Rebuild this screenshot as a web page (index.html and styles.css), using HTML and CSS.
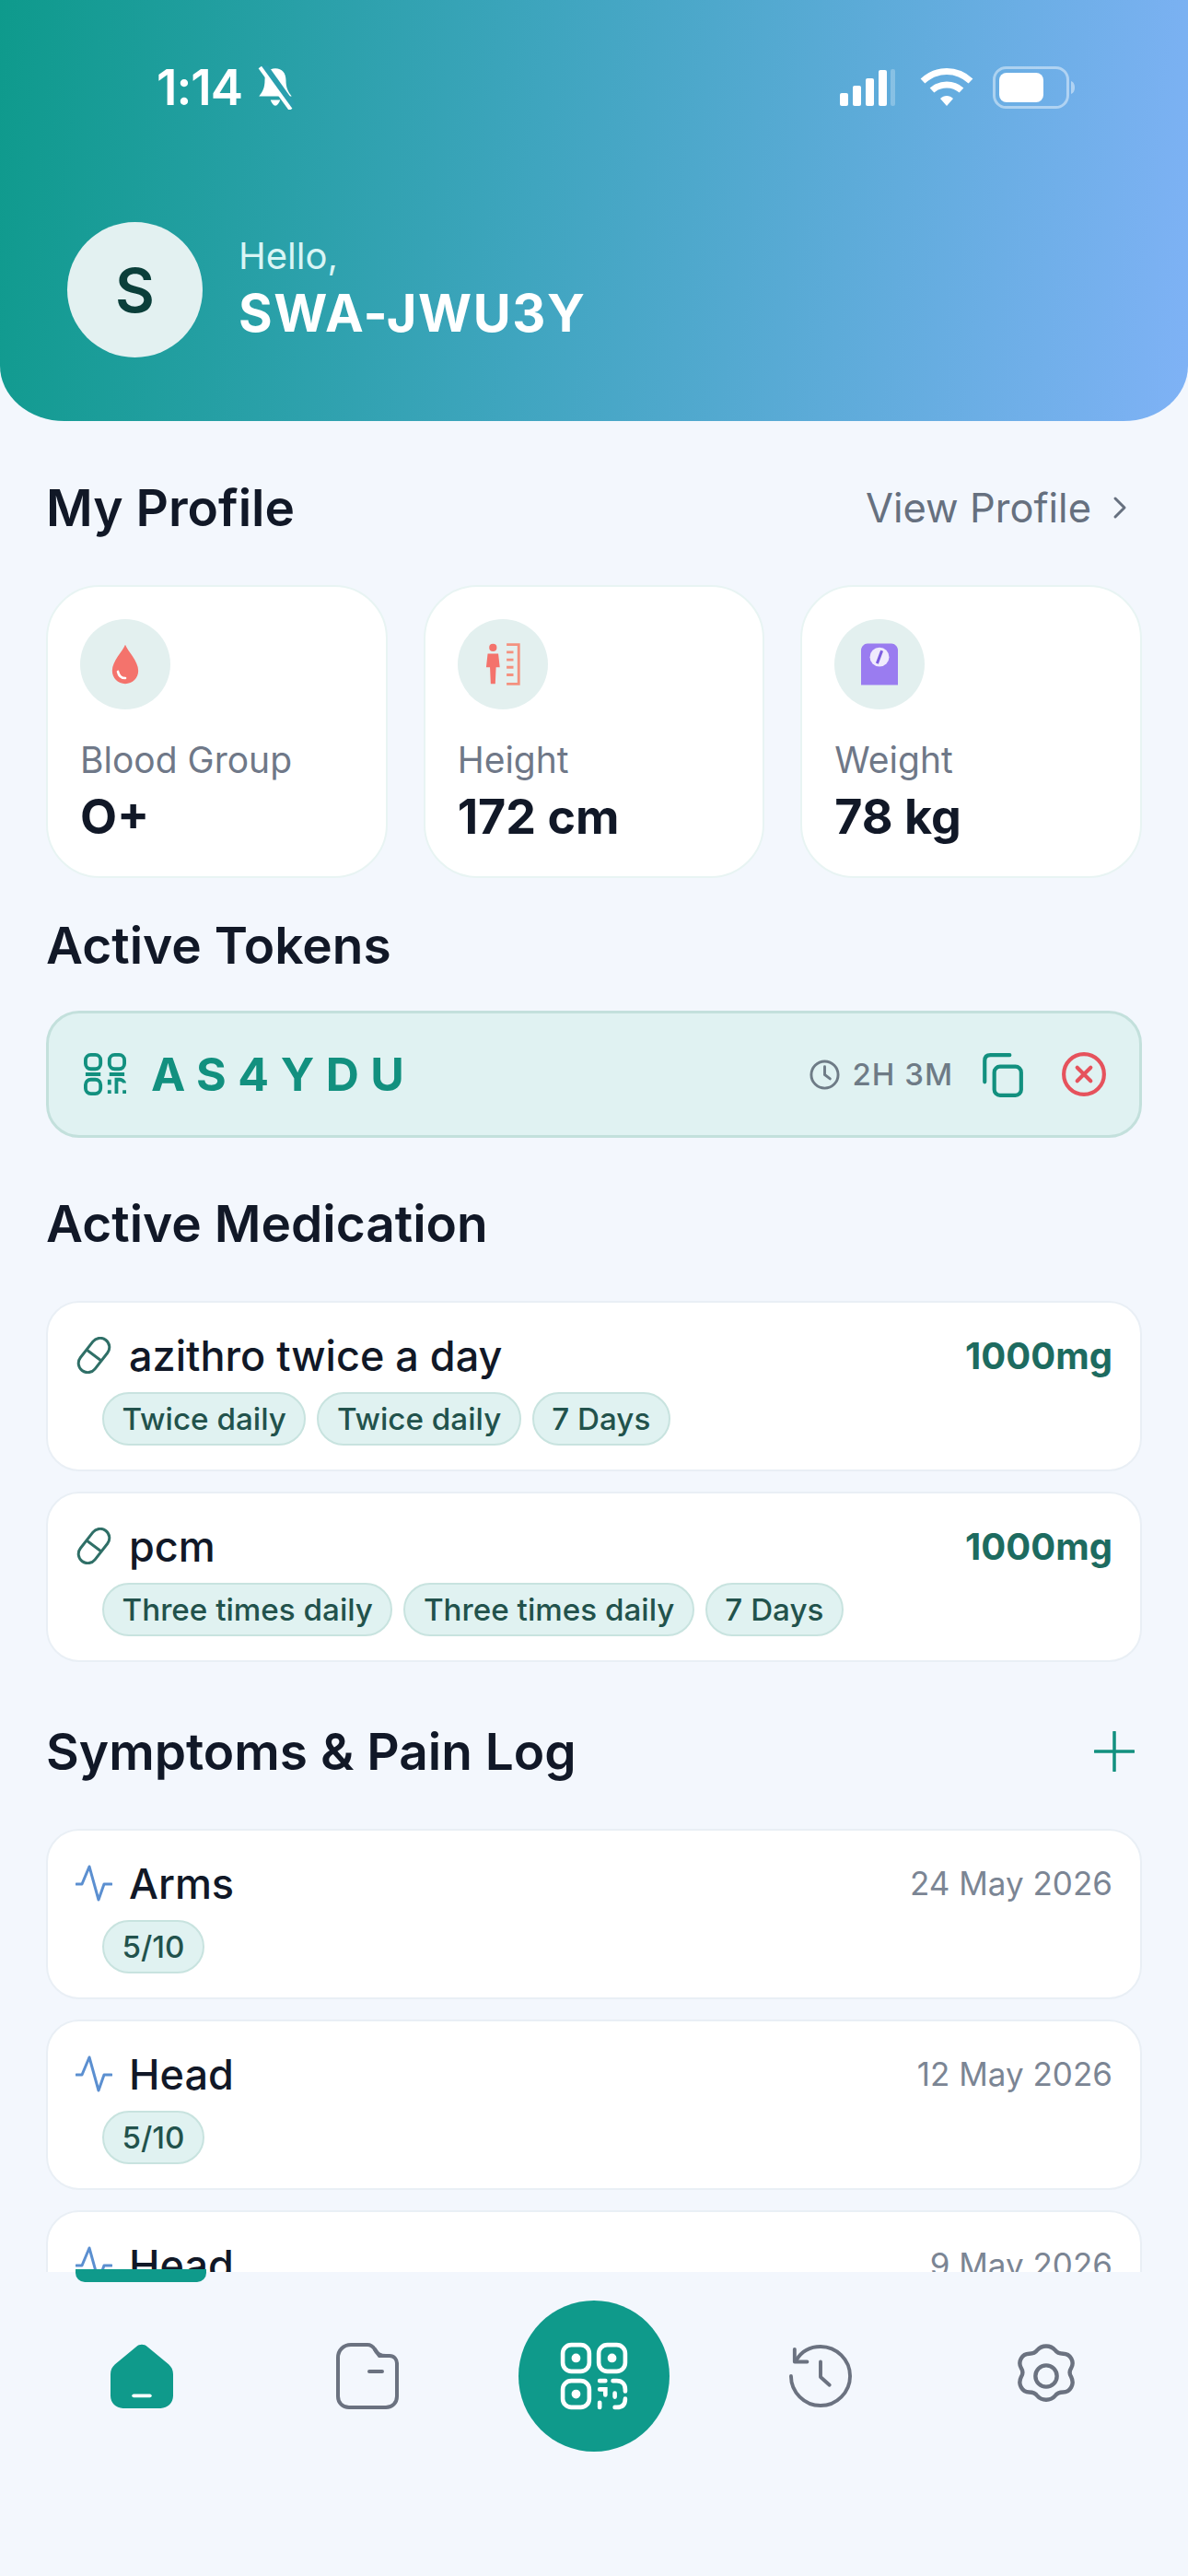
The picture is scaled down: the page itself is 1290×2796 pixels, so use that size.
FILE: index.html
```html
<!DOCTYPE html>
<html>
  <head>
    <title>My Profile</title>
    <link rel="stylesheet" href="styles.css">
  </head>
  <body>
    <div class="screen">
      <div class="top">
        <div class="status">
          <div class="time">1:14
            <svg class="bell" viewBox="0 0 44 46"><path d="M22 3c-7 0-11 5-11 12 0 8-2 12-6 17h34c-4-5-6-9-6-17 0-7-4-12-11-12z" fill="#fff"/><path d="M17 36c1 3 3 6 5 6s4-3 5-6z" fill="#fff"/><path d="M10 0l30 42" stroke="#2a9fae" stroke-width="7"/><path d="M6 2l32 44" stroke="#fff" stroke-width="4"/></svg>
          </div>
          <div class="status-icons">
            <svg class="signal" viewBox="0 0 62 40"><rect x="0" y="26" width="9" height="14" rx="2" fill="#fff"/><rect x="14" y="18" width="9" height="22" rx="2" fill="#fff"/><rect x="28" y="10" width="9" height="30" rx="2" fill="#fff"/><rect x="42" y="1" width="9" height="39" rx="2" fill="#fff"/><rect x="55" y="0" width="5" height="40" rx="2" fill="#fff" opacity=".25"/></svg>
            <svg class="wifi" viewBox="0 0 58 42"><path d="M3 14c15-14 37-14 52 0" fill="none" stroke="#fff" stroke-width="7"/><path d="M13 24c9-8 23-8 32 0" fill="none" stroke="#fff" stroke-width="7"/><path d="M22 33c4-4 10-4 14 0l-7 8z" fill="#fff"/></svg>
            <svg class="battery" viewBox="0 0 90 46"><rect x="1.5" y="1.5" width="80" height="43" rx="13" fill="none" stroke="#fff" stroke-opacity=".45" stroke-width="3"/><rect x="7" y="7" width="48" height="32" rx="8" fill="#fff"/><path d="M85 16c3 1 4 4 4 7s-1 6-4 7z" fill="#fff" opacity=".45"/></svg>
          </div>
        </div>
        <div class="hello">
          <div class="avatar">S</div>
          <div class="hello-text">
            <div class="hello-small">Hello,</div>
            <div class="hello-name">SWA-JWU3Y</div>
          </div>
        </div>
      </div>

      <div class="scroll">
        <div class="head head-profile">
          <h2>My Profile</h2>
          <div class="view-link">View Profile
            <svg class="chev" viewBox="0 0 20 28"><path d="M4 4l10 10-10 10" fill="none" stroke="#66707f" stroke-width="3" stroke-linecap="round" stroke-linejoin="round"/></svg>
          </div>
        </div>

        <div class="stats">
          <div class="stat">
            <div class="stat-icon">
              <svg viewBox="0 0 40 52"><path d="M20 2c-3 8-16 20-16 32 0 9 7 16 16 16s16-7 16-16C36 22 23 10 20 2z" fill="#f4736c"/><path d="M11 35c1 5 4 8 9 8" fill="none" stroke="#fff" stroke-width="3" stroke-linecap="round"/></svg>
            </div>
            <div class="stat-label">Blood Group</div>
            <div class="stat-value">O+</div>
          </div>
          <div class="stat">
            <div class="stat-icon">
              <svg viewBox="0 0 46 56"><circle cx="10" cy="6" r="5" fill="#f4736c"/><path d="M3 14h14l2 18h-5l-1 22H7L6 32H1z" fill="#f4736c"/><path d="M28 2h16v52H28M28 12h9M28 22h9M28 32h9M28 42h9" fill="none" stroke="#f4917f" stroke-width="3.5"/></svg>
            </div>
            <div class="stat-label">Height</div>
            <div class="stat-value">172 cm</div>
          </div>
          <div class="stat">
            <div class="stat-icon">
              <svg viewBox="0 0 46 52"><path d="M8 0h30c4 0 8 4 8 8v44H0V8c0-4 4-8 8-8z" fill="#9a7cf0"/><circle cx="23" cy="17" r="12" fill="#fff" opacity=".85"/><path d="M26 9l-6 16" stroke="#7d5ee0" stroke-width="3.5"/></svg>
            </div>
            <div class="stat-label">Weight</div>
            <div class="stat-value">78 kg</div>
          </div>
        </div>

        <div class="head head-tokens"><h2>Active Tokens</h2></div>
        <div class="token">
          <svg class="token-qr" viewBox="0 0 24 24" fill="none" stroke="#12907f" stroke-width="2"><rect x="1" y="1" width="8.500" height="8" rx="3"/><rect x="14.500" y="1" width="8.500" height="8" rx="3"/><rect x="1" y="15" width="8.500" height="8" rx="3"/><path d="M14.500 15v3M14.500 21v2M18.500 23v-8h2c1 0 2.500 1 2.500 2M23 21v2M1 12h8.500M14.500 12H23"/></svg>
          <div class="token-code">AS4YDU</div>
          <div class="token-right">
            <svg class="token-clock" viewBox="0 0 24 24" fill="none" stroke="#6e7b86" stroke-width="2" stroke-linecap="round"><circle cx="12" cy="12" r="10"/><path d="M12 6v6l4 3"/></svg>
            <span class="token-time">2H 3M</span>
            <svg class="token-copy" viewBox="0 0 24 24" fill="none" stroke="#12907f" stroke-width="2" stroke-linecap="round"><rect x="8" y="8" width="14" height="15" rx="3"/><path d="M3 16V5c0-2 1-3 3-3h10"/></svg>
            <svg class="token-close" viewBox="0 0 24 24" fill="none" stroke="#e6525c" stroke-width="2" stroke-linecap="round"><circle cx="12" cy="12" r="10.500"/><path d="M8.500 8.500l7 7M15.500 8.500l-7 7"/></svg>
          </div>
        </div>

        <div class="head head-meds"><h2>Active Medication</h2></div>
        <div class="list">
          <div class="row">
            <div class="row-top">
              <svg class="row-icon" viewBox="0 0 40 40" fill="none" stroke="#2f6f67" stroke-width="3"><rect x="-21" y="-10" width="42" height="20" rx="10" transform="translate(20 20) rotate(-52)"/><path d="M12 14l16 12"/></svg>
              <div class="row-title">azithro twice a day</div>
              <div class="dose">1000mg</div>
            </div>
            <div class="tags"><span class="tag">Twice daily</span><span class="tag">Twice daily</span><span class="tag">7 Days</span></div>
          </div>
          <div class="row">
            <div class="row-top">
              <svg class="row-icon" viewBox="0 0 40 40" fill="none" stroke="#2f6f67" stroke-width="3"><rect x="-21" y="-10" width="42" height="20" rx="10" transform="translate(20 20) rotate(-52)"/><path d="M12 14l16 12"/></svg>
              <div class="row-title">pcm</div>
              <div class="dose">1000mg</div>
            </div>
            <div class="tags"><span class="tag">Three times daily</span><span class="tag">Three times daily</span><span class="tag">7 Days</span></div>
          </div>
        </div>

        <div class="head head-symptoms">
          <h2>Symptoms &amp; Pain Log</h2>
          <svg class="plus" viewBox="0 0 44 44"><path d="M22 1v42M1 22h42" stroke="#12907f" stroke-width="3.500" stroke-linecap="round"/></svg>
        </div>
        <div class="list">
          <div class="row">
            <div class="row-top">
              <svg class="row-icon" viewBox="0 0 40 40" fill="none" stroke="#5b8fd0" stroke-width="3" stroke-linejoin="round" stroke-linecap="round"><path d="M1 21h6l8-19 10 36 6-17h8"/></svg>
              <div class="row-title">Arms</div>
              <div class="date">24 May 2026</div>
            </div>
            <div class="tags"><span class="tag">5/10</span></div>
          </div>
          <div class="row">
            <div class="row-top">
              <svg class="row-icon" viewBox="0 0 40 40" fill="none" stroke="#5b8fd0" stroke-width="3" stroke-linejoin="round" stroke-linecap="round"><path d="M1 21h6l8-19 10 36 6-17h8"/></svg>
              <div class="row-title">Head</div>
              <div class="date">12 May 2026</div>
            </div>
            <div class="tags"><span class="tag">5/10</span></div>
          </div>
          <div class="row">
            <div class="row-top">
              <svg class="row-icon" viewBox="0 0 40 40" fill="none" stroke="#5b8fd0" stroke-width="3" stroke-linejoin="round" stroke-linecap="round"><path d="M1 21h6l8-19 10 36 6-17h8"/></svg>
              <div class="row-title">Head</div>
              <div class="date">9 May 2026</div>
            </div>
          </div>
        </div>
      </div>

      <div class="nav">
        <div class="nav-bar"></div>
        <div class="nav-item">
          <svg class="nav-home" viewBox="0 0 70 72"><path d="M29 3c3-3 9-3 12 0l24 20c3 3 5 6 5 11v24c0 8-6 14-14 14H14C6 72 0 66 0 58V34c0-5 2-8 5-11z" fill="#0f9a8b"/><path d="M26 58h18" stroke="#fff" stroke-width="4" stroke-linecap="round"/></svg>
        </div>
        <div class="nav-item">
          <svg class="nav-folder" viewBox="0 0 68 72" fill="none" stroke="#6b7280" stroke-width="4" stroke-linecap="round" stroke-linejoin="round"><path d="M2 16C2 8 8 2 16 2h18c4 0 6 2 8 5l5 7h11c5 0 8 4 8 8v36c0 7-5 12-12 12H14C7 70 2 65 2 58z"/><path d="M42 7c2 5 6 7 12 7M36 31h14"/></svg>
        </div>
        <button class="scan">
          <svg viewBox="0 0 72 72" fill="none" stroke="#fff" stroke-width="4.500" stroke-linecap="round"><rect x="3" y="3" width="28" height="28" rx="9"/><rect x="41" y="3" width="28" height="28" rx="9"/><rect x="3" y="41" width="28" height="28" rx="9"/><circle cx="17" cy="17" r="2.500" fill="#fff"/><circle cx="55" cy="17" r="2.500" fill="#fff"/><circle cx="17" cy="55" r="2.500" fill="#fff"/><path d="M42 41h6M42 50h6v6M42 64v5M56 41h4c6 0 9 4 9 9v2M69 60c0 6-3 9-9 9h-2M58 54v4"/></svg>
        </button>
        <div class="nav-item">
          <svg class="nav-history" viewBox="0 0 70 72" fill="none" stroke="#6b7280" stroke-width="4" stroke-linecap="round" stroke-linejoin="round"><path d="M8 18C14 8 24 3 35 3c18 0 33 15 33 33S53 69 35 69 2 54 2 36"/><path d="M6 6v14h14"/><path d="M35 20v17l10 9"/></svg>
        </div>
        <div class="nav-item">
          <svg class="nav-gear" viewBox="0 0 70 72" fill="none" stroke="#6b7280" stroke-width="4.500" stroke-linejoin="round"><path d="M25 7c5-6 15-6 20 0 2 3 6 4 9 4 8 0 13 9 9 16-2 3-2 7 0 10 4 8-1 17-9 17-3 0-7 1-9 4-5 6-15 6-20 0-2-3-6-4-9-4-8 0-13-9-9-17 2-3 2-7 0-10-4-7 1-16 9-16 3 0 7-1 9-4z"/><circle cx="35" cy="36" r="12"/></svg>
        </div>
      </div>
    </div>
  </body>
</html>
```

FILE: styles.css
```css
body {
  margin: 0;
  padding: 0;
  font-family: Inter, "Noto Sans", sans-serif;
  color: #111827;
  background: #f3f7fd;
}

h2 { margin: 0; font-size: 55px; font-weight: 600; line-height: 68px; color: #111827; }

.screen { width: 1290px; height: 2796px; display: flex; flex-direction: column; overflow: hidden; }

/* header */
.top {
  height: 457px;
  flex: none;
  box-sizing: border-box;
  padding: 70px 122px 0 73px;
  background: linear-gradient(97deg, #0e9a8c 0%, #3fa5bf 45%, #7fb2f6 100%);
  border-radius: 0 0 70px 70px / 0 0 60px 60px;
}
.status { display: flex; justify-content: space-between; align-items: center; height: 50px; padding-left: 97px; }
.time { display: flex; align-items: center; gap: 12px; font-size: 53px; font-weight: 600; color: #fff; letter-spacing: -1px; }
.bell { width: 48px; height: 48px; }
.status-icons { display: flex; align-items: center; }
.signal { width: 62px; height: 40px; margin-right: 25px; }
.wifi { width: 58px; height: 42px; margin-right: 21px; }
.battery { width: 90px; height: 46px; }

.hello { display: flex; align-items: center; gap: 39px; margin-top: 121px; }
.avatar {
  width: 147px;
  height: 147px;
  border-radius: 50%;
  background: #e3f1f1;
  color: #0b3f3a;
  font-size: 66px;
  font-weight: 600;
  display: flex;
  align-items: center;
  justify-content: center;
}
.hello-text { padding-bottom: 3px; }
.hello-small { font-size: 40px; color: #d9f5f5; line-height: 50px; }
.hello-name { margin-top: 3px; font-size: 56px; font-weight: 700; color: #fff; line-height: 68px; letter-spacing: 1.6px; }

/* scrolling part */
.scroll { height: 2009px; flex: none; overflow: hidden; padding: 0 50px 0 50px; box-sizing: border-box; }

.head { display: flex; justify-content: space-between; align-items: center; }
.head-profile { margin-top: 60px; }
.head-tokens { margin-top: 39px; }
.head-meds { margin-top: 59px; }
.head-symptoms { margin-top: 63px; padding-right: 8px; }

.view-link { display: flex; align-items: center; gap: 22px; font-size: 43.5px; color: #66707f; padding-right: 13px; }
.chev { width: 20px; height: 28px; }
.plus { width: 44px; height: 44px; }

.stats { display: flex; gap: 39px; margin-top: 50px; }
.stat {
  flex: 1;
  height: 318px;
  box-sizing: border-box;
  padding: 35px 35px 0;
  background: #fff;
  border: 2px solid #e8f4f3;
  border-radius: 58px;
}
.stat-icon { width: 98px; height: 98px; border-radius: 50%; background: #e3f0ef; display: flex; align-items: center; justify-content: center; }
.stat-icon svg { height: 46px; width: 40px; }
.stat-label { margin-top: 31px; font-size: 39px; line-height: 48px; color: #6f7888; }
.stat-value { margin-top: 8px; font-size: 52px; line-height: 60px; font-weight: 700; color: #111827; }

.token {
  display: flex;
  align-items: center;
  margin-top: 37px;
  height: 138px;
  box-sizing: border-box;
  padding: 0 38px 0 37px;
  background: #e0f2f2;
  border: 3px solid #c3e0dc;
  border-radius: 36px;
}
.token-qr { width: 48px; height: 46px; }
.token-code { margin-left: 26px; font-size: 50px; font-weight: 700; letter-spacing: 12.5px; color: #12907f; }
.token-right { margin-left: auto; display: flex; align-items: center; }
.token-clock { width: 35px; height: 35px; }
.token-time { margin-left: 12px; font-size: 33px; font-weight: 500; color: #6e7b86; letter-spacing: 1px; }
.token-copy { width: 50px; height: 50px; margin-left: 28px; }
.token-close { width: 50px; height: 50px; margin-left: 39px; margin-right: -3px; }

.list { display: flex; flex-direction: column; gap: 22px; margin-top: 50px; }
.row {
  height: 185px;
  flex: none;
  box-sizing: border-box;
  padding: 27px 30px 0;
  background: #fff;
  border: 2px solid #e9eff5;
  border-radius: 36px;
}
.row-top { display: flex; align-items: center; height: 60px; }
.row-icon { width: 40px; height: 40px; flex: none; }
.row-title { margin-left: 18px; font-size: 45px; font-weight: 500; color: #111827; }
.dose { margin-left: auto; font-size: 40px; font-weight: 700; color: #1d6b60; }
.date { margin-left: auto; font-size: 35px; color: #7b8594; }

.tags { display: flex; gap: 12px; margin-top: 10px; padding-left: 29px; }
.tag {
  box-sizing: border-box;
  height: 58px;
  padding: 0 19.5px;
  display: flex;
  align-items: center;
  background: #e0f2f1;
  border: 2px solid #c8e3df;
  border-radius: 29px;
  font-size: 33.2px;
  font-weight: 500;
  color: #22524c;
}

/* bottom nav */
.nav {
  position: relative;
  flex: 1;
  box-sizing: border-box;
  padding: 31px 31px 0;
  display: grid;
  grid-template-columns: repeat(5, 1fr);
  align-items: start;
  justify-items: center;
  background: #f3f7fd;
}
.nav-bar { position: absolute; left: 82px; top: -3px; width: 142px; height: 14px; background: #0f9a8b; border-radius: 0 0 10px 10px; }
.nav-item { height: 164px; display: flex; align-items: center; }
.nav-item svg { width: 68px; height: 72px; }
.scan {
  width: 164px;
  height: 164px;
  padding: 0;
  border: 0;
  border-radius: 50%;
  background: #0f9a8b;
  display: flex;
  align-items: center;
  justify-content: center;
}
.scan svg { width: 74px; height: 76px; }
```
